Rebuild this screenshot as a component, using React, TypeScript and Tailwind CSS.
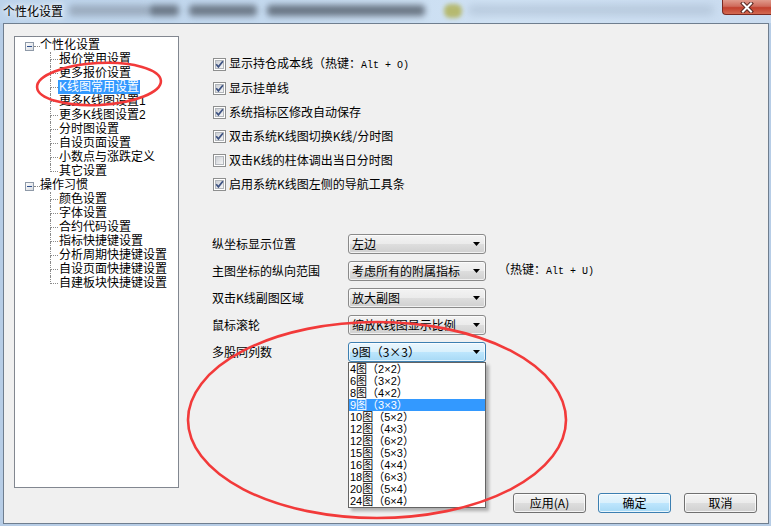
import React from "react";

const LINE = "border-dotted border-[#8a8a8a]";
const TREEFONT = "font-['Liberation_Sans','Noto_Sans_CJK_SC',sans-serif]";

function Mono({ children }: { children: React.ReactNode }) {
  return <span className="font-['Liberation_Mono',monospace] text-[10px]">{children}</span>;
}

function CheckBox({ checked }: { checked: boolean }) {
  return (
    <svg width="13" height="13" viewBox="0 0 13 13" className="shrink-0">
      <defs>
        <linearGradient id="cbg" x1="0" y1="0" x2="1" y2="1">
          <stop offset="0" stopColor="#c9cdd3" />
          <stop offset="1" stopColor="#f8f8f8" />
        </linearGradient>
      </defs>
      <rect x="0.5" y="0.5" width="12" height="12" fill="#ffffff" stroke="#8e8f8f" />
      <rect x="2.5" y="2.5" width="8" height="8" fill="url(#cbg)" stroke="#b3b7bc" />
      {checked && (
        <path d="M3.2 6.3 L5.4 8.9 L9.9 3.3" fill="none" stroke="#3d5282" strokeWidth="1.7" />
      )}
    </svg>
  );
}

function MinusBox() {
  return (
    <svg width="9" height="9" viewBox="0 0 9 9" className="shrink-0 mt-[4px]">
      <defs>
        <linearGradient id="mbg" x1="0" y1="0" x2="1" y2="1">
          <stop offset="0" stopColor="#ffffff" />
          <stop offset="1" stopColor="#d6d9de" />
        </linearGradient>
      </defs>
      <rect x="0.5" y="0.5" width="8" height="8" fill="url(#mbg)" stroke="#8f9aa8" />
      <path d="M2 4.5 H7" stroke="#2d4f8e" />
    </svg>
  );
}

const group1 = [
  "报价常用设置",
  "更多报价设置",
  "K线图常用设置",
  "更多K线图设置1",
  "更多K线图设置2",
  "分时图设置",
  "自设页面设置",
  "小数点与涨跌定义",
  "其它设置",
];
const group2 = [
  "颜色设置",
  "字体设置",
  "合约代码设置",
  "指标快捷键设置",
  "分析周期快捷键设置",
  "自设页面快捷键设置",
  "自建板块快捷键设置",
];

function RootRow({ label }: { label: string }) {
  return (
    <div className="h-[14px] flex items-start pl-[10px]">
      <MinusBox />
      <span className={`w-[6px] h-[9px] border-b ${LINE} shrink-0`} />
      <span className={`${TREEFONT} text-[12px] leading-[14px] whitespace-nowrap`}>{label}</span>
    </div>
  );
}

function ChildRow({ label, last, selected }: { label: string; last: boolean; selected?: boolean }) {
  return (
    <div className="h-[14px] flex pl-[35px]">
      <div className="w-[8px] flex flex-col shrink-0">
        <div className={`h-[8px] border-l border-b ${LINE}`} />
        <div className={`h-[6px] ${last ? "" : `border-l ${LINE}`}`} />
      </div>
      <span
        className={`px-[1px] ${TREEFONT} text-[12px] leading-[14px] whitespace-nowrap ${
          selected ? "bg-[#3399ff] text-white" : ""
        }`}
      >
        {label}
      </span>
    </div>
  );
}

function Tree() {
  return (
    <div className="ml-[10px] w-[165px] h-[452px] border border-[#828790] bg-white pt-[1px] shrink-0">
      <RootRow label="个性化设置" />
      {group1.map((l, i) => (
        <ChildRow key={l} label={l} last={i === group1.length - 1} selected={l === "K线图常用设置"} />
      ))}
      <RootRow label="操作习惯" />
      {group2.map((l, i) => (
        <ChildRow key={l} label={l} last={i === group2.length - 1} />
      ))}
    </div>
  );
}

const BTN_GRAD =
  "bg-[linear-gradient(to_bottom,#f3f3f3_0%,#ebebeb_50%,#dedede_50%,#d0d0d0_100%)]";
const BLUE_GRAD =
  "bg-[linear-gradient(to_bottom,#eaf6fd_0%,#d9f0fc_50%,#bee6fd_50%,#a7d9f5_100%)]";

function Arrow() {
  return (
    <svg width="7" height="4" viewBox="0 0 7 4" className="mr-[5px] shrink-0">
      <path d="M0 0 H7 L3.5 4 Z" fill="#000" />
    </svg>
  );
}

const listItems = [
  "4图（2×2）",
  "6图（3×2）",
  "8图（4×2）",
  "9图（3×3）",
  "10图（5×2）",
  "12图（4×3）",
  "12图（6×2）",
  "15图（5×3）",
  "16图（4×4）",
  "18图（6×3）",
  "20图（5×4）",
  "24图（6×4）",
];

function Select({ value, active }: { value: string; active?: boolean }) {
  return (
    <div
      className={`relative w-[138px] h-[20px] rounded-[3px] border flex items-center pl-[3px] shrink-0 shadow-[inset_0_0_0_1px_rgba(255,255,255,0.7)] ${
        active ? `border-[#3c7fb1] ${BLUE_GRAD}` : `border-[#8a8a8a] ${BTN_GRAD}`
      }`}
    >
      <span className="flex-1 text-[12px] leading-[14px] whitespace-nowrap">{value}</span>
      <Arrow />
      {active && (
        <div className="absolute left-[-1px] top-[19px] w-[138px] border border-[#646464] bg-white shadow-[3px_3px_3px_rgba(0,0,0,0.28)] z-10">
          {listItems.map((it) => (
            <div
              key={it}
              className={`h-[12px] pl-[1px] font-['Liberation_Sans','Noto_Sans_CJK_SC',sans-serif] text-[11px] leading-[12px] whitespace-nowrap ${
                it === "9图（3×3）" ? "bg-[#3399ff] text-white" : ""
              }`}
            >
              {it}
            </div>
          ))}
        </div>
      )}
    </div>
  );
}

const checks: [string, boolean, React.ReactNode?][] = [
  ["显示持仓成本线（热键：", true, <Mono key="m">Alt + O)</Mono>],
  ["显示挂单线", true],
  ["系统指标区修改自动保存", true],
  ["双击系统K线图切换K线/分时图", true],
  ["双击K线的柱体调出当日分时图", false],
  ["启用系统K线图左侧的导航工具条", true],
];

function RightPanel() {
  return (
    <div className="ml-[34px] flex flex-col">
      <div className="mt-[16px] flex flex-col">
        {checks.map(([label, c, extra]) => (
          <div key={label} className="h-[24px] flex items-center">
            <CheckBox checked={c} />
            <span className="ml-[3px] text-[12px] leading-[14px] whitespace-nowrap">
              {label}
              {extra}
            </span>
          </div>
        ))}
      </div>
      <div className="mt-[34px] -ml-[1px] flex flex-col">
        <div className="h-[27px] flex items-center">
          <span className="w-[136px] text-[12px] leading-[14px]">纵坐标显示位置</span>
          <Select value="左边" />
        </div>
        <div className="h-[27px] flex items-center">
          <span className="w-[136px] text-[12px] leading-[14px]">主图坐标的纵向范围</span>
          <Select value="考虑所有的附属指标" />
          <span className="ml-[12px] text-[12px] leading-[14px] whitespace-nowrap">
            （热键：<Mono>Alt + U)</Mono>
          </span>
        </div>
        <div className="h-[27px] flex items-center">
          <span className="w-[136px] text-[12px] leading-[14px]">双击K线副图区域</span>
          <Select value="放大副图" />
        </div>
        <div className="h-[27px] flex items-center">
          <span className="w-[136px] text-[12px] leading-[14px]">鼠标滚轮</span>
          <Select value="缩放K线图显示比例" />
        </div>
        <div className="h-[27px] flex items-center">
          <span className="w-[136px] text-[12px] leading-[14px]">多股同列数</span>
          <Select value="9图（3×3）" active />
        </div>
      </div>
    </div>
  );
}

function Button({ label, primary, className = "" }: { label: React.ReactNode; primary?: boolean; className?: string }) {
  return (
    <div
      className={`w-[73px] h-[20px] rounded-[3px] border flex items-center justify-center text-[12px] leading-[14px] shadow-[inset_0_0_0_1px_rgba(255,255,255,0.75)] ${
        primary ? `border-[#3c7fb1] ${BLUE_GRAD}` : `border-[#707070] ${BTN_GRAD}`
      } ${className}`}
    >
      {label}
    </div>
  );
}

export default function App() {
  return (
    <div className="w-[771px] h-[526px] overflow-hidden relative bg-[#b7cde6] text-black font-['Noto_Sans_CJK_SC',sans-serif]">
      {/* title bar */}
      <div className="h-[23px] flex items-start bg-[linear-gradient(to_right,#bcd3eb,#c4d9ef_35%,#d0e2f4_65%,#cadcf0)]">
        <span className="mt-[4px] ml-[3px] text-[12px] leading-[14px] whitespace-nowrap [text-shadow:0_0_5px_#ffffff,0_0_8px_#ffffff]">
          个性化设置
        </span>
        <span className="mt-[5px] ml-[6px] w-[80px] h-[11px] rounded-[4px] bg-[#8e9cad] opacity-70 blur-[3px]" />
        <span className="mt-[5px] w-[30px] h-[11px] rounded-[4px] bg-[#4e5864] opacity-75 blur-[3px]" />
        <span className="mt-[5px] ml-[10px] w-[68px] h-[11px] rounded-[4px] bg-[#505a66] opacity-75 blur-[3px]" />
        <span className="mt-[5px] ml-[10px] w-[158px] h-[11px] rounded-[4px] bg-[#4a5460] opacity-75 blur-[3px]" />
        <span className="mt-[4px] ml-[19px] w-[18px] h-[14px] rounded-[6px] bg-[#b0b050] opacity-80 blur-[2px]" />
        <span className="mt-[5px] ml-[6px] w-[246px] h-[10px] rounded-[4px] bg-[#a0b2c6] opacity-50 blur-[4px]" />
        <div className="ml-auto w-[49px] h-[15px] rounded-bl-[4px] border border-t-0 border-r-0 border-[#7a2a22] bg-[linear-gradient(to_bottom,#e09a8c_0%,#cf6b5c_45%,#c2402e_55%,#d36a52_100%)] flex items-center justify-center">
          <svg width="14" height="11" viewBox="0 0 14 11">
            <path d="M3 1.5 L11 9.5 M11 1.5 L3 9.5" stroke="#5a2a24" strokeWidth="4" strokeLinecap="square" />
            <path d="M3 1.5 L11 9.5 M11 1.5 L3 9.5" stroke="#ffffff" strokeWidth="2" strokeLinecap="square" />
          </svg>
        </div>
      </div>

      {/* content box */}
      <div className="ml-[3px] w-[766px] h-[501px] border border-[#6f7e8f] bg-[#f0f0f0] flex flex-col pt-[12px]">
        <div className="flex h-[452px]">
          <Tree />
          <RightPanel />
        </div>
        <div className="mt-[5px] flex justify-end pr-[11px]">
          <Button label="应用(A)" />
          <Button label="确定" primary className="ml-[12px]" />
          <Button label="取消" className="ml-[13px]" />
        </div>
      </div>

      {/* red annotations */}
      <svg className="absolute left-0 top-0 pointer-events-none z-20" width="771" height="526" viewBox="0 0 771 526">
        <ellipse
          cx="99"
          cy="84"
          rx="62"
          ry="21"
          fill="none"
          stroke="#f23a3a"
          strokeWidth="2.6"
          transform="rotate(-3 99 84)"
        />
        <ellipse cx="377" cy="420" rx="189" ry="98" fill="none" stroke="#f23a3a" strokeWidth="2.6" />
      </svg>
    </div>
  );
}
